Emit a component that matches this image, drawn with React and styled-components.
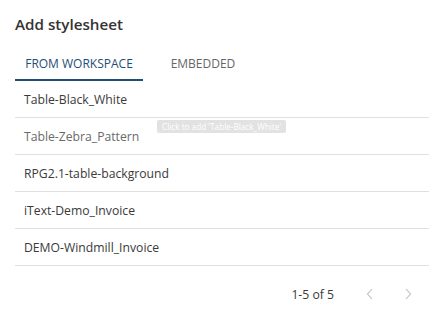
import styled, { createGlobalStyle } from "styled-components";

const GlobalStyle = createGlobalStyle`
	body {
		margin: 0;
		background: #fff;
		font-family: "Open Sans", "Noto Sans", sans-serif;
	}
`;

const Dialog = styled.div`
	position: relative;
	width: 447px;
	height: 322px;
	padding: 0 18px 0 15px;
	box-sizing: border-box;
	display: flex;
	flex-direction: column;
`;

const Title = styled.h2`
	margin: 0;
	padding-top: 14px;
	height: 34px;
	box-sizing: border-box;
	font-size: 15.2px;
	font-weight: 600;
	color: #333;
	line-height: 20px;
`;

const Tabs = styled.div`
	display: flex;
	margin-top: 13px;
`;

const Tab = styled.button`
	border: none;
	background: none;
	font-family: inherit;
	font-size: 12px;
	text-transform: uppercase;
	color: ${(p) => (p.active ? "#1f4d78" : "#666")};
	padding: 0 10px;
	width: ${(p) => p.width}px;
	height: 34px;
	box-sizing: border-box;
	border-bottom: 2px solid ${(p) => (p.active ? "#1f4d78" : "transparent")};
	cursor: pointer;
	text-align: center;
`;

const List = styled.ul`
	list-style: none;
	margin: 0;
	padding: 0;
`;

const Row = styled.li`
	height: 36px;
	display: flex;
	align-items: center;
	padding-left: 9px;
	border-bottom: 1px solid #e0e0e0;
	font-size: 12.2px;
	color: ${(p) => (p.muted ? "#6a6a6a" : "#3a3a3a")};
`;

const Footer = styled.div`
	display: flex;
	align-items: center;
	justify-content: flex-end;
	height: 56px;
	padding-right: 2px;
	font-size: 12.2px;
	color: #3a3a3a;
`;

const Range = styled.span`
	margin-right: 17px;
`;

const PageButton = styled.button`
	border: none;
	background: none;
	padding: 0;
	width: 38px;
	height: 24px;
	display: flex;
	align-items: center;
	justify-content: center;
	color: #bdbdbd;
`;

const Tooltip = styled.div`
	position: absolute;
	left: 157px;
	top: 120px;
	height: 13px;
	padding: 0 5px;
	border-radius: 2px;
	background: #e2e2e2;
	color: #fff;
	font-size: 8.2px;
	line-height: 13px;
	white-space: nowrap;
`;

const Chevron = ({ dir }) => (
	<svg width="8" height="12" viewBox="0 0 8 12">
		<path
			d={dir === "left" ? "M6 1 L1.5 6 L6 11" : "M2 1 L6.5 6 L2 11"}
			fill="none"
			stroke="currentColor"
			strokeWidth="1.1"
		/>
	</svg>
);

const items = [
	"Table-Black_White",
	"Table-Zebra_Pattern",
	"RPG2.1-table-background",
	"iText-Demo_Invoice",
	"DEMO-Windmill_Invoice",
];

const App = () => (
	<>
		<GlobalStyle />
		<Dialog>
			<Title>Add stylesheet</Title>
			<Tabs>
				<Tab active width={128}>From workspace</Tab>
				<Tab width={120}>Embedded</Tab>
			</Tabs>
			<List>
				{items.map((name, i) => (
					<Row key={name} muted={i === 1}>
						{name}
					</Row>
				))}
			</List>
			<Footer>
				<Range>1-5 of 5</Range>
				<PageButton>
					<Chevron dir="left" />
				</PageButton>
				<PageButton>
					<Chevron dir="right" />
				</PageButton>
			</Footer>
			<Tooltip>Click to add 'Table-Black_White'</Tooltip>
		</Dialog>
	</>
);

export default App;
